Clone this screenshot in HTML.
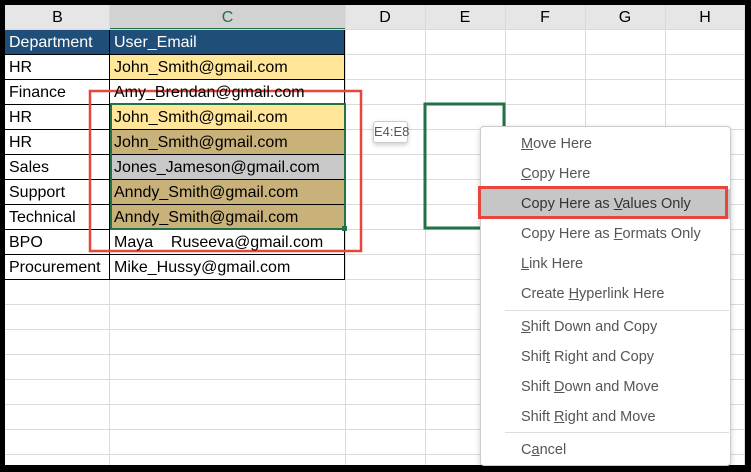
<!DOCTYPE html><html><head><style>
body{margin:0;width:751px;height:472px;background:#000;position:relative;overflow:hidden;font-family:"Liberation Sans",sans-serif}
.a{position:absolute}
#sheet{left:5px;top:5px;width:740px;height:460px;background:#fff;overflow:hidden}
.t{position:absolute;font-size:16px;line-height:25px;white-space:nowrap;color:#000}
.m{position:absolute;left:40px;font-size:14.5px;color:#555;white-space:nowrap}
</style></head><body>
<div id="sheet" class="a">
<svg class="a" style="left:0;top:0" width="740" height="460">
<rect x="0" y="0" width="740" height="25" fill="#e6e6e6"/>
<rect x="105" y="0" width="235" height="25" fill="#d2d2d2"/>
<line x1="105" y1="24" x2="340" y2="24" stroke="#217346" stroke-width="2"/>
<g stroke="#dadada" stroke-width="1">
<line x1="104.5" y1="0" x2="104.5" y2="460"/><line x1="340.5" y1="0" x2="340.5" y2="460"/><line x1="420.5" y1="0" x2="420.5" y2="460"/><line x1="500.5" y1="0" x2="500.5" y2="460"/><line x1="580.5" y1="0" x2="580.5" y2="460"/><line x1="660.5" y1="0" x2="660.5" y2="460"/><line x1="739.5" y1="0" x2="739.5" y2="460"/>
<line x1="0" y1="24.5" x2="740" y2="24.5"/>
<line x1="0" y1="49.5" x2="740" y2="49.5"/><line x1="0" y1="74.5" x2="740" y2="74.5"/><line x1="0" y1="99.5" x2="740" y2="99.5"/><line x1="0" y1="124.5" x2="740" y2="124.5"/><line x1="0" y1="149.5" x2="740" y2="149.5"/><line x1="0" y1="174.5" x2="740" y2="174.5"/><line x1="0" y1="199.5" x2="740" y2="199.5"/><line x1="0" y1="224.5" x2="740" y2="224.5"/><line x1="0" y1="249.5" x2="740" y2="249.5"/><line x1="0" y1="274.5" x2="740" y2="274.5"/><line x1="0" y1="299.5" x2="740" y2="299.5"/><line x1="0" y1="324.5" x2="740" y2="324.5"/><line x1="0" y1="349.5" x2="740" y2="349.5"/><line x1="0" y1="374.5" x2="740" y2="374.5"/><line x1="0" y1="399.5" x2="740" y2="399.5"/><line x1="0" y1="424.5" x2="740" y2="424.5"/><line x1="0" y1="449.5" x2="740" y2="449.5"/>
</g>
<rect x="0" y="25" width="340" height="25" fill="#1f4e78"/>
<rect x="105" y="50" width="235" height="25" fill="#ffe699"/>
<rect x="105" y="100" width="235" height="25" fill="#ffe699"/>
<rect x="105" y="125" width="235" height="25" fill="#c9b27a"/>
<rect x="105" y="150" width="235" height="25" fill="#c8c8c8"/>
<rect x="105" y="175" width="235" height="50" fill="#c9b27a"/>
<g stroke="#000" stroke-width="1">
<line x1="104.5" y1="25" x2="104.5" y2="275"/><line x1="339.5" y1="25" x2="339.5" y2="275"/>
<line x1="0" y1="74.5" x2="340" y2="74.5"/><line x1="0" y1="99.5" x2="340" y2="99.5"/><line x1="0" y1="124.5" x2="340" y2="124.5"/><line x1="0" y1="149.5" x2="340" y2="149.5"/><line x1="0" y1="174.5" x2="340" y2="174.5"/><line x1="0" y1="199.5" x2="340" y2="199.5"/><line x1="0" y1="224.5" x2="340" y2="224.5"/><line x1="0" y1="249.5" x2="340" y2="249.5"/><line x1="0" y1="274.5" x2="340" y2="274.5"/><line x1="0" y1="49.5" x2="340" y2="49.5"/>
</g>
<rect x="106" y="99" width="234" height="125" fill="none" stroke="#217346" stroke-width="2"/>
<rect x="337" y="221" width="5" height="5" fill="#217346"/>
<rect x="420" y="99" width="79" height="124" fill="none" stroke="#217346" stroke-width="3"/>
<rect x="85" y="86" width="271" height="160" fill="none" stroke="#e8453c" stroke-width="2.5"/>
</svg>
<div class="t" style="left:0;top:0;width:105px;text-align:center">B</div>
<div class="t" style="left:105px;top:0;width:235px;text-align:center;color:#217346">C</div>
<div class="t" style="left:340px;top:0;width:80px;text-align:center">D</div>
<div class="t" style="left:420px;top:0;width:80px;text-align:center">E</div>
<div class="t" style="left:500px;top:0;width:80px;text-align:center">F</div>
<div class="t" style="left:580px;top:0;width:80px;text-align:center">G</div>
<div class="t" style="left:660px;top:0;width:80px;text-align:center">H</div>
<div class="t" style="left:4px;top:25px;color:#fff">Department</div><div class="t" style="left:109px;top:25px;color:#fff">User_Email</div>
<div class="t" style="left:4px;top:50px">HR</div><div class="t" style="left:109px;top:50px">John_Smith@gmail.com</div>
<div class="t" style="left:4px;top:75px">Finance</div><div class="t" style="left:109px;top:75px">Amy_Brendan@gmail.com</div>
<div class="t" style="left:4px;top:100px">HR</div><div class="t" style="left:109px;top:100px">John_Smith@gmail.com</div>
<div class="t" style="left:4px;top:125px">HR</div><div class="t" style="left:109px;top:125px">John_Smith@gmail.com</div>
<div class="t" style="left:4px;top:150px">Sales</div><div class="t" style="left:109px;top:150px">Jones_Jameson@gmail.com</div>
<div class="t" style="left:4px;top:175px">Support</div><div class="t" style="left:109px;top:175px">Anndy_Smith@gmail.com</div>
<div class="t" style="left:4px;top:200px">Technical</div><div class="t" style="left:109px;top:200px">Anndy_Smith@gmail.com</div>
<div class="t" style="left:4px;top:225px">BPO</div><div class="t" style="left:109px;top:225px">Maya&nbsp;&nbsp;&nbsp;&nbsp;Ruseeva@gmail.com</div>
<div class="t" style="left:4px;top:250px">Procurement</div><div class="t" style="left:109px;top:250px">Mike_Hussy@gmail.com</div>
<div class="a" style="left:368px;top:116px;width:33px;height:20px;border:1px solid #ccc;border-radius:3px;background:#fff;box-shadow:0 2px 5px rgba(0,0,0,.2);font-size:13px;line-height:20px;color:#555;text-align:center">E4:E8</div>
</div>
<div class="a" style="left:480px;top:126px;width:249px;height:338px;background:#fff;border:1px solid #ccc;border-radius:4px;box-shadow:0 2px 6px rgba(0,0,0,.2)">
<div class="a" style="left:0;top:62px;width:249px;height:30px;background:#c6c6c6"></div>
<div class="a" style="left:-3px;top:59px;width:250px;height:33px;border:3px solid #e8453c;box-sizing:border-box"></div>
<div class="a" style="left:24px;top:183px;width:224px;height:1px;background:#ddd"></div>
<div class="a" style="left:24px;top:305px;width:224px;height:1px;background:#ddd"></div>
<div class="m" style="top:9px"><u>M</u>ove Here</div>
<div class="m" style="top:39px"><u>C</u>opy Here</div>
<div class="m" style="top:69px;color:#333">Copy Here as <u>V</u>alues Only</div>
<div class="m" style="top:99px">Copy Here as <u>F</u>ormats Only</div>
<div class="m" style="top:129px"><u>L</u>ink Here</div>
<div class="m" style="top:159px">Create <u>H</u>yperlink Here</div>
<div class="m" style="top:192px"><u>S</u>hift Down and Copy</div>
<div class="m" style="top:222px">Shif<u>t</u> Right and Copy</div>
<div class="m" style="top:252px">Shift <u>D</u>own and Move</div>
<div class="m" style="top:282px">Shift <u>R</u>ight and Move</div>
<div class="m" style="top:315px">C<u>a</u>ncel</div>
</div>
</body></html>
